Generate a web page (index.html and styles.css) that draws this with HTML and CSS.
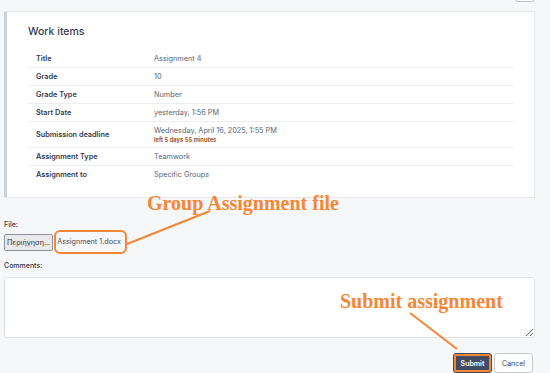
FILE: index.html
```html
<!DOCTYPE html>
<html lang="en">
<head>
    <meta charset="UTF-8">
    <meta name="viewport" content="width=device-width, initial-scale=1.0">
    <title>Assignment - Submit</title>
    <link rel="stylesheet" href="styles.css">
</head>
<body>
    <div class="page">
        <div class="top-bar">
            <button class="top-btn" type="button"></button>
        </div>

        <div class="card">
            <h3>Work items</h3>
            <table class="details">
                <tr><th>Title</th><td>Assignment 4</td></tr>
                <tr><th>Grade</th><td>10</td></tr>
                <tr><th>Grade Type</th><td>Number</td></tr>
                <tr><th>Start Date</th><td>yesterday, 1:56 PM</td></tr>
                <tr class="tall">
                    <th>Submission deadline</th>
                    <td>Wednesday, April 16, 2025, 1:55 PM<span class="time-left">left 5 days 55 minutes</span></td>
                </tr>
                <tr><th>Assignment Type</th><td>Teamwork</td></tr>
                <tr class="last"><th>Assignment to</th><td>Specific Groups</td></tr>
            </table>
        </div>

        <form class="submit-form">
            <label class="field-label">File:</label>
            <div class="file-row">
                <span class="browse-btn">Περιήγηση...</span>
                <span class="file-name">Assignment 1.docx</span>
            </div>

            <label class="field-label comments-label">Comments:</label>
            <textarea class="comments"></textarea>

            <div class="actions">
                <button type="button" class="btn-submit">Submit</button>
                <button type="button" class="btn-cancel">Cancel</button>
            </div>
        </form>

        <!-- screenshot annotations -->
        <svg class="arrows" width="550" height="373" viewBox="0 0 550 373">
            <line x1="210" y1="211" x2="127" y2="244" />
            <line x1="410" y1="313" x2="457" y2="349" />
        </svg>
        <div class="note note-file">Group Assignment file</div>
        <div class="note note-submit">Submit assignment</div>
    </div>
</body>
</html>
```

FILE: styles.css
```css
html, body {
    margin: 0;
    background: #f6f7f9;
}

body {
    font-family: 'Inter', 'Noto Sans', sans-serif;
    color: #3a4152;
    overflow: hidden;
}

.page {
    position: relative;
    width: 531px;
    height: 373px;
    padding: 0 15px 0 4px;
}

.top-bar {
    display: flex;
    justify-content: flex-end;
    height: 11px;
}

.top-btn {
    width: 20px;
    height: 20px;
    margin-top: -18px;
    background: #fff;
    border: 1px solid #b9bec8;
    border-radius: 3px;
}

.card {
    background: #fff;
    border: 1px solid #e6e8ec;
    border-left: 3px solid #cdd1da;
    border-radius: 2px;
    padding: 14px 20px 13px 21px;
    height: 158px;
}

.card h3 {
    margin: 0 0 12px;
    font-size: 10.5px;
    font-weight: 500;
    color: #353d50;
    line-height: 12px;
}

.details {
    width: 100%;
    border-collapse: collapse;
    font-size: 7.3px;
}

.details th,
.details td {
    text-align: left;
    padding: 0 8px;
    height: 17px;
    border-bottom: 1px solid #eceef1;
    vertical-align: middle;
}

.details th {
    width: 102px;
    font-weight: 600;
    color: #333a4b;
}

.details td {
    color: #606470;
}

.details tr.tall th,
.details tr.tall td {
    height: 25px;
}

.details tr.last th,
.details tr.last td {
    border-bottom: none;
}

.time-left {
    display: block;
    margin-top: 1px;
    font-size: 5.8px;
    font-weight: 700;
    color: #a3571f;
}

.submit-form {
    display: flex;
    flex-direction: column;
    padding-top: 22px;
}

.field-label {
    font-size: 7px;
    font-weight: 500;
    color: #30374a;
    line-height: 10px;
}

.file-row {
    display: flex;
    align-items: center;
    gap: 1px;
}

.browse-btn {
    display: inline-block;
    height: 15px;
    line-height: 15px;
    padding: 0 2px;
    font-size: 7.2px;
    color: #333;
    background: #e9e9ed;
    border: 1px solid #8f8f9d;
    border-radius: 2px;
}

.file-name {
    display: inline-block;
    height: 20px;
    line-height: 20px;
    padding: 0 4px 0 1px;
    font-size: 7.2px;
    color: #44495a;
    border: 2px solid #f58634;
    border-radius: 6px;
}

.comments-label {
    margin-top: 7px;
}

.comments {
    margin-top: 6px;
    height: 59px;
    background: #fff;
    border: 1px solid #dfe2e7;
    border-radius: 3px;
    resize: vertical;
    padding: 0;
}

.actions {
    display: flex;
    justify-content: flex-end;
    gap: 2px;
    margin-top: 15px;
    padding-right: 2px;
}

.actions button {
    height: 20px;
    font-family: 'Inter', sans-serif;
    font-size: 7px;
    border-radius: 3px;
    cursor: pointer;
}

.btn-submit {
    width: 39px;
    background: #414b63;
    color: #fff;
    font-weight: 600;
    border: 1px solid #414b63;
    outline: 2px solid #f58634;
    outline-offset: -3px;
}

.btn-cancel {
    width: 39px;
    background: #fff;
    color: #3a4152;
    border: 1px solid #c6cad2;
}

.arrows {
    position: absolute;
    top: 0;
    left: 0;
    pointer-events: none;
}

.arrows line {
    stroke: #f58634;
    stroke-width: 2;
}

.note {
    position: absolute;
    font-family: 'Liberation Serif', serif;
    font-weight: 700;
    font-size: 20px;
    line-height: 20px;
    color: #f58634;
    white-space: nowrap;
}

.note-file {
    left: 147px;
    top: 193px;
}

.note-submit {
    left: 340px;
    top: 291px;
}
```
